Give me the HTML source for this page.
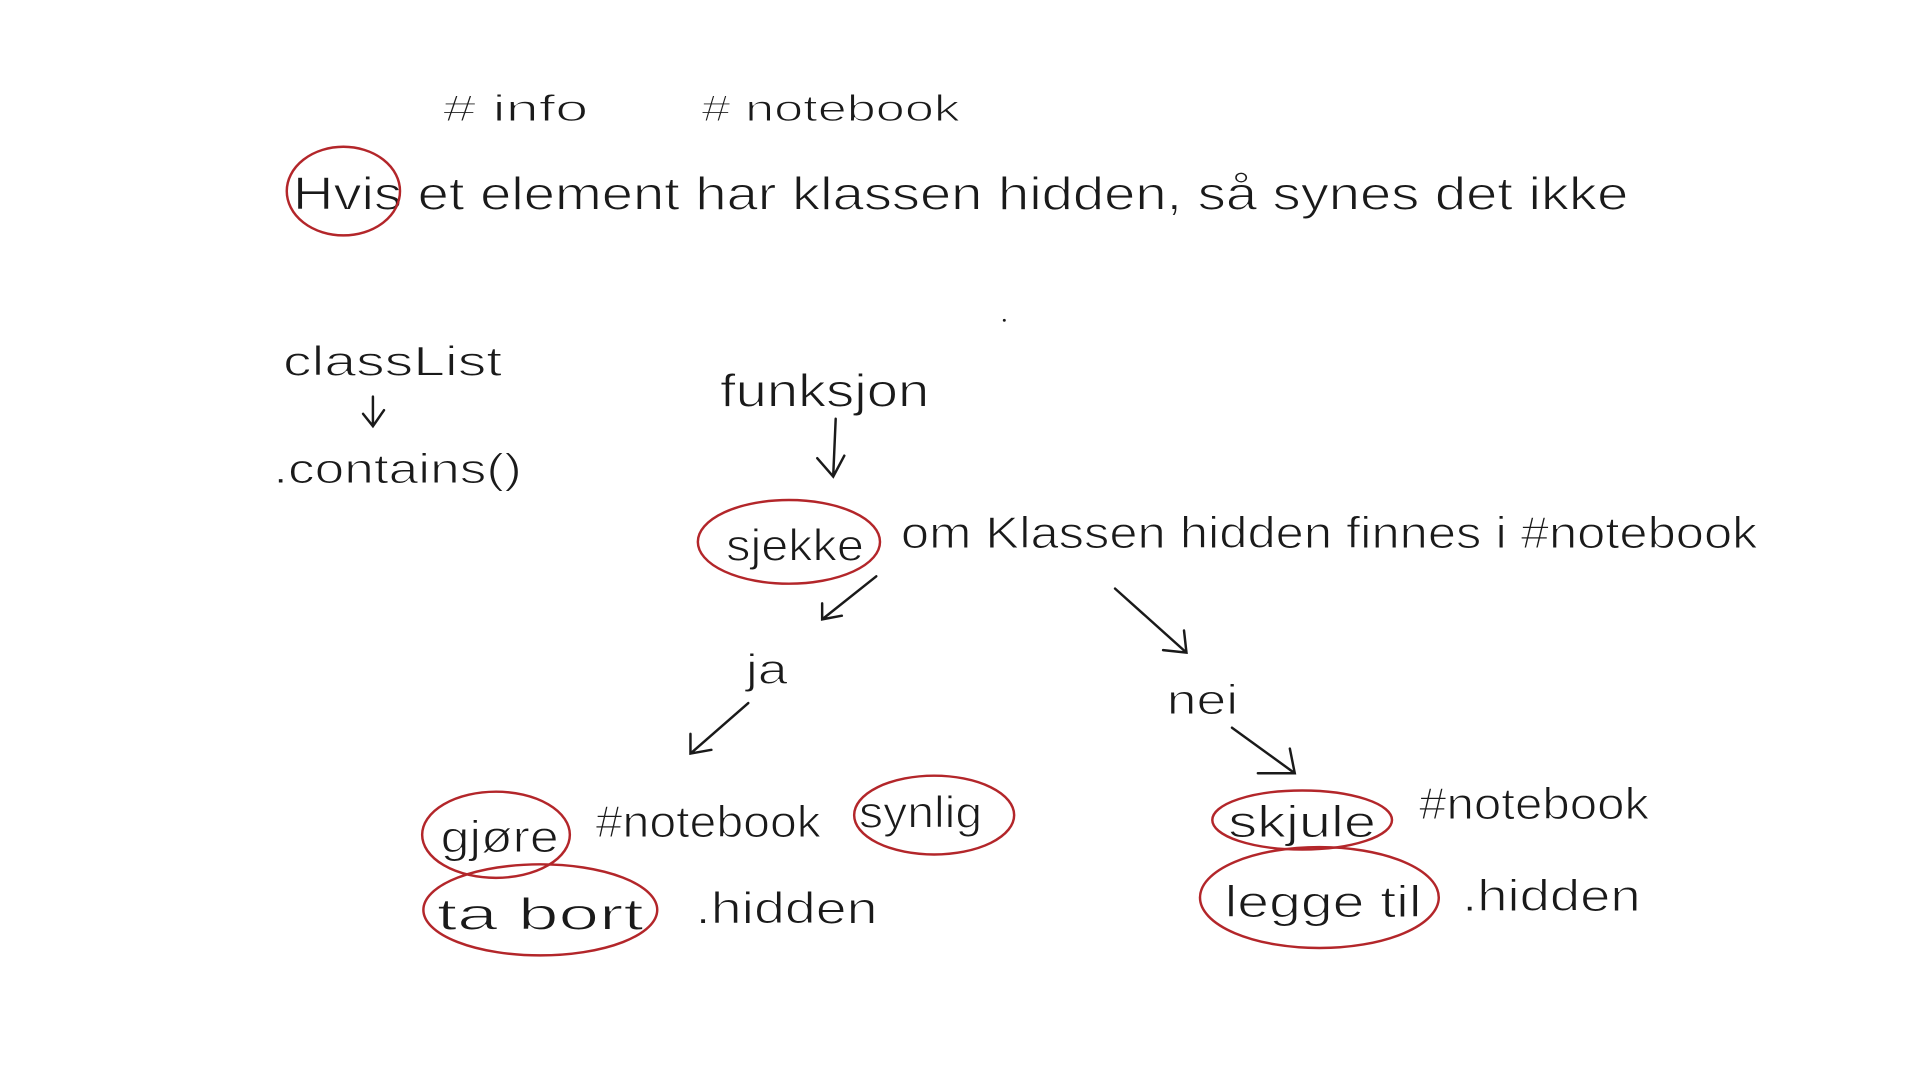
<!DOCTYPE html>
<html><head><meta charset="utf-8"><style>
html,body{margin:0;padding:0;background:#fff;width:1920px;height:1080px;overflow:hidden}
svg{display:block}
text{font-family:"Liberation Sans",sans-serif;fill:#1a1a1a;stroke:#fff;stroke-width:0.9}
.a{stroke:#1a1a1a;stroke-width:2;fill:none;stroke-linecap:round}
.r{stroke:#b3262a;stroke-width:2;fill:none}
</style></head><body>
<svg width="1920" height="1080" viewBox="0 0 1560 877">
<text x="360" y="98" font-size="30" textLength="118" lengthAdjust="spacingAndGlyphs"># info</text>
<text x="570" y="98" font-size="30" textLength="210" lengthAdjust="spacingAndGlyphs"># notebook</text>
<text x="238" y="170" font-size="38" textLength="1085" lengthAdjust="spacingAndGlyphs">Hvis et element har klassen hidden, så synes det ikke</text>
<ellipse class="r" cx="279" cy="155" rx="46" ry="36"/>
<circle cx="816" cy="260" r="1.2" fill="#1a1a1a"/>
<text x="230" y="305" font-size="34" textLength="178" lengthAdjust="spacingAndGlyphs">classList</text>
<path class="a" d="M303 322 L303 345 M295 336 L303 346 L312 333"/>
<text x="222" y="392" font-size="34" textLength="202" lengthAdjust="spacingAndGlyphs">.contains()</text>
<text x="585" y="330" font-size="38" textLength="170" lengthAdjust="spacingAndGlyphs">funksjon</text>
<path class="a" d="M679 340 L677 386 M664 372 L677 387 L686 370"/>
<text x="590" y="455" font-size="36" textLength="112" lengthAdjust="spacingAndGlyphs">sjekke</text>
<ellipse class="r" cx="641" cy="440" rx="74" ry="34"/>
<text x="732" y="445" font-size="36" textLength="696" lengthAdjust="spacingAndGlyphs">om Klassen hidden finnes i #notebook</text>
<path class="a" d="M712 468 L668 503 M668 490 L668 503 L684 500"/>
<path class="a" d="M906 478 L964 530 M945 528 L964 530 L962 512"/>
<text x="606" y="555" font-size="34" textLength="34" lengthAdjust="spacingAndGlyphs">ja</text>
<path class="a" d="M608 571 L561 612 M561 596 L561 612 L578 609"/>
<text x="948" y="580" font-size="34" textLength="58" lengthAdjust="spacingAndGlyphs">nei</text>
<path class="a" d="M1001 591 L1052 628 M1022 628 L1052 628 L1048 608"/>
<text x="358" y="692" font-size="36" textLength="96" lengthAdjust="spacingAndGlyphs">gjøre</text>
<ellipse class="r" cx="403" cy="678" rx="60" ry="35"/>
<text x="484" y="680" font-size="36" textLength="183" lengthAdjust="spacingAndGlyphs">#notebook</text>
<text x="698" y="672" font-size="36" textLength="100" lengthAdjust="spacingAndGlyphs">synlig</text>
<ellipse class="r" cx="759" cy="662" rx="65" ry="32"/>
<text x="355" y="755" font-size="36" textLength="168" lengthAdjust="spacingAndGlyphs">ta bort</text>
<ellipse class="r" cx="439" cy="739" rx="95" ry="37"/>
<text x="565" y="750" font-size="36" textLength="148" lengthAdjust="spacingAndGlyphs">.hidden</text>
<text x="998" y="680" font-size="36" textLength="120" lengthAdjust="spacingAndGlyphs">skjule</text>
<ellipse class="r" cx="1058" cy="666" rx="73" ry="24"/>
<text x="1153" y="665" font-size="36" textLength="187" lengthAdjust="spacingAndGlyphs">#notebook</text>
<text x="995" y="745" font-size="36" textLength="160" lengthAdjust="spacingAndGlyphs">legge til</text>
<ellipse class="r" cx="1072" cy="729" rx="97" ry="41"/>
<text x="1188" y="740" font-size="36" textLength="145" lengthAdjust="spacingAndGlyphs">.hidden</text>
</svg>
</body></html>
